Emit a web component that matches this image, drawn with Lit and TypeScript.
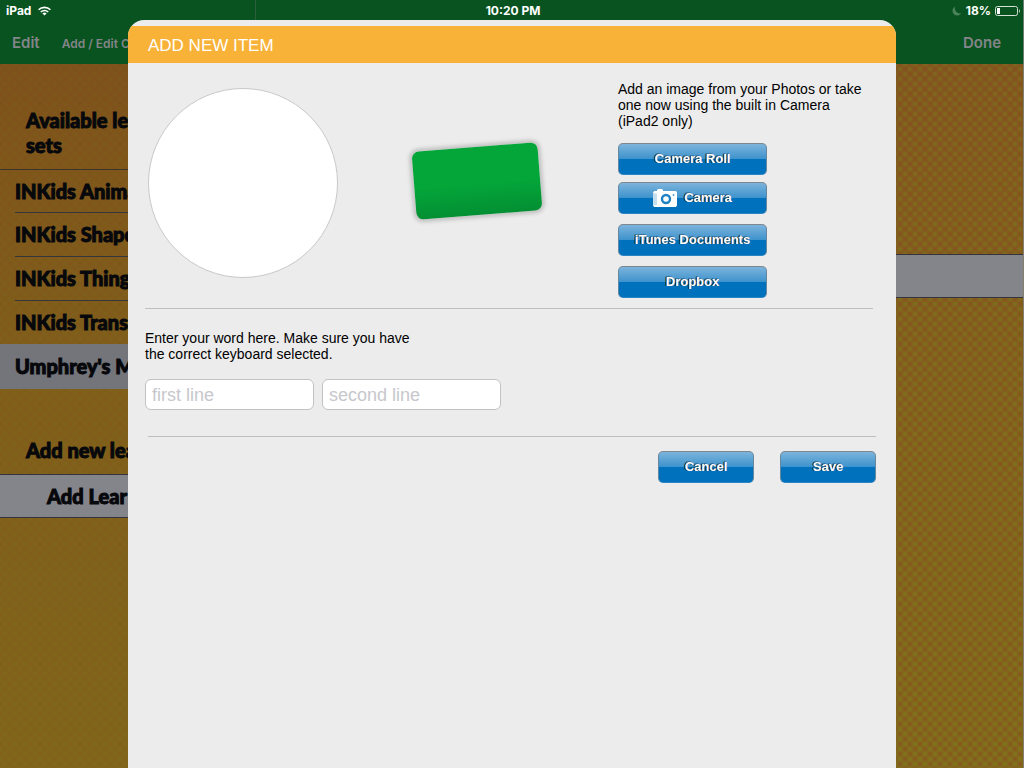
import { LitElement, html, css, svg } from "lit";
import { customElement, property } from "lit/decorators.js";

@customElement("status-bar")
class StatusBar extends LitElement {
  static styles = css`
    :host {
      display: grid;
      grid-template-columns: 1fr auto 1fr;
      align-items: center;
      height: 21px;
      padding: 0 4px 0 6px;
      color: #fff;
      font: 700 12px/21px Inter, sans-serif;
    }
    .side {
      display: flex;
      align-items: center;
      gap: 7px;
    }
    .end {
      justify-content: flex-end;
      gap: 4px;
    }
    svg {
      display: block;
    }
  `;

  render() {
    return html`
      <div class="side">
        <span>iPad</span>
        <svg width="13" height="10" viewBox="0 0 13 10" fill="none" stroke="#fff" stroke-width="1.6">
          <path d="M0.6 3.8a8.4 8.4 0 0 1 11.8 0" />
          <path d="M2.8 6a5.3 5.3 0 0 1 7.4 0" />
          <path d="M6.5 9.6 4.4 7.5a3 3 0 0 1 4.2 0z" fill="#fff" stroke="none" />
        </svg>
      </div>
      <span>10:20 PM</span>
      <div class="side end">
        <svg width="10" height="10" viewBox="0 0 10 10">
          <path d="M3.2 0.4A4.8 4.8 0 1 0 9.4 7.2 5.2 5.2 0 0 1 3.2 0.4z" fill="#4c8259" />
        </svg>
        <span>18%</span>
        <svg width="25" height="10" viewBox="0 0 25 10">
          <rect x="0.5" y="0.5" width="22" height="9" rx="2" fill="none" stroke="#d5e0d7" />
          <rect x="2" y="2" width="3" height="6" fill="#fff" />
          <path d="M24 3.2v3.6c1.2-.6 1.2-3 0-3.6z" fill="#d5e0d7" />
        </svg>
      </div>
    `;
  }
}

@customElement("gloss-button")
class GlossButton extends LitElement {
  @property() label = "";
  @property() icon = "";

  static styles = css`
    :host {
      display: block;
    }
    .button {
      display: flex;
      align-items: center;
      justify-content: center;
      gap: 7px;
      box-sizing: border-box;
      width: 100%;
      height: 32px;
      padding: 0 8px;
      border: 1px solid;
      border-color: #7c878f #64879f #2b84c4;
      border-radius: 5px;
      background: linear-gradient(#7db4dc, #3e93cd 49%, #0071bd 50%, #0071bd);
      color: #fff;
      font: bold 13px/16px "Liberation Sans", Arial, sans-serif;
      text-shadow: -1px 0 0 #0b1a26, -1px -1px 0 #10283c66;
      white-space: nowrap;
      cursor: pointer;
    }
    svg {
      display: block;
    }
  `;

  render() {
    const camera = svg`
      <path d="M0 3.4 1.2 2H4V1l1-1h4l1 1v1h13l1 1.4v13L22.8 18H1.2L0 16.6z" fill="#fff"/>
      <path d="M0 3.6 4 5v11L0 16.6z" fill="#c8dff0"/>
      <circle cx="13" cy="10" r="4" fill="none" stroke="#1f80c3" stroke-width="2.4"/>
      <path d="M20.5 5v2M19.5 6h2" stroke="#5aa2d4" stroke-width="1"/>`;
    return html`
      <button class="button" type="button">
        ${this.icon === "camera"
          ? html`<svg width="24" height="18" viewBox="0 0 24 18" aria-hidden="true">${camera}</svg>`
          : ""}
        <span>${this.label}</span>
      </button>
    `;
  }
}

@customElement("add-item-form")
class AddItemForm extends LitElement {
  static styles = css`
    :host {
      display: block;
      box-sizing: border-box;
      padding-top: 6px;
      border-radius: 16px 16px 0 0;
      overflow: hidden;
      background: #ececec;
      color: #000;
      font: 14px/16px "Liberation Sans", Arial, sans-serif;
    }
    .title {
      margin: 0;
      padding: 2px 20px 0;
      background: #f8b238;
      color: #fff;
      font-size: 17px;
      font-weight: 400;
      line-height: 35px;
    }
    .picture {
      display: grid;
      grid-template-columns: 1fr 1fr 255px;
      margin: 0 23px 0 17px;
      padding: 18px 0 10px;
      border-bottom: 1px solid #bfbfc1;
    }
    .photo {
      box-sizing: border-box;
      width: 190px;
      height: 190px;
      margin: 7px 0 0 3px;
      border: 1px solid #c8c8c8;
      border-radius: 50%;
      background: #fff;
    }
    .card {
      width: 126px;
      height: 68px;
      margin: 66px 0 0 32px;
      border-radius: 7px;
      background: linear-gradient(#04a539 55%, #038f33);
      box-shadow: 0 0 4px 3px #c4c4c4;
      transform: rotate(-4.5deg);
    }
    .sources {
      display: flex;
      flex-direction: column;
      align-items: flex-start;
      gap: 10px;
    }
    .sources gloss-button {
      width: 149px;
    }
    .hint {
      margin: 0;
    }
    .sources .hint {
      margin-bottom: 4px;
    }
    .pair {
      display: grid;
      gap: 7px;
    }
    .words {
      margin: 0 20px 0 17px;
      padding: 21px 0 26px;
    }
    .words .hint {
      max-width: 280px;
    }
    .fields {
      display: flex;
      gap: 8px;
      margin-top: 17px;
    }
    .field {
      box-sizing: border-box;
      width: 169px;
      height: 31px;
      padding: 2px 6px 0;
      border: 1px solid #c2c2c4;
      border-radius: 6px;
      background: #fff;
      font: 18px/24px "Liberation Sans", Arial, sans-serif;
    }
    .wide {
      width: 179px;
    }
    .field::placeholder {
      color: #c7c7cd;
      opacity: 1;
    }
    .actions {
      display: flex;
      justify-content: flex-end;
      gap: 26px;
      margin: 0 20px;
      padding-top: 14px;
      border-top: 1px solid #bfbfc1;
    }
    .actions gloss-button {
      width: 96px;
    }
  `;

  render() {
    return html`
      <h1 class="title">ADD NEW ITEM</h1>
      <section class="picture">
        <div class="photo"></div>
        <div class="card"></div>
        <div class="sources">
          <p class="hint">
            Add an image from your Photos or take one now using the built in Camera (iPad2 only)
          </p>
          <div class="pair">
            <gloss-button label="Camera Roll"></gloss-button>
            <gloss-button label="Camera" icon="camera"></gloss-button>
          </div>
          <gloss-button label="iTunes Documents"></gloss-button>
          <gloss-button label="Dropbox"></gloss-button>
        </div>
      </section>
      <section class="words">
        <p class="hint" id="word-hint">
          Enter your word here. Make sure you have the correct keyboard selected.
        </p>
        <div class="fields">
          <input class="field" type="text" placeholder="first line" aria-labelledby="word-hint" />
          <input class="field wide" type="text" placeholder="second line" aria-labelledby="word-hint" />
        </div>
      </section>
      <footer class="actions">
        <gloss-button label="Cancel"></gloss-button>
        <gloss-button label="Save"></gloss-button>
      </footer>
    `;
  }
}

@customElement("app-root")
class AppRoot extends LitElement {
  static styles = css`
    :host {
      display: flex;
      flex-direction: column;
      position: relative;
      min-height: 100vh;
      overflow: hidden;
      background: #08531f;
      color: #07080c;
      font: 900 20px/25px Lato, sans-serif;
    }
    .top {
      display: grid;
      grid-template-columns: 25% 1fr;
      height: 64px;
    }
    .bar {
      display: flex;
      align-items: flex-end;
      justify-content: space-between;
      box-sizing: border-box;
      padding: 0 12px 11px;
      border-right: 1px solid #2b5f3b;
    }
    .bar.main {
      justify-content: flex-end;
      padding-right: 22px;
      border-right-color: #6b7f70;
    }
    .nav {
      padding: 0;
      border: 0;
      background: none;
      color: #84858a;
      font: 600 15px/20px Inter, sans-serif;
    }
    .heading {
      flex: 1;
      margin: 0 0 0 22px;
      color: #84858a;
      font: 600 12px/18px Inter, sans-serif;
      white-space: nowrap;
    }
    .split {
      flex: 1;
      display: grid;
      grid-template-columns: 25% 1fr;
      background:
        radial-gradient(circle, #8a4c1fb3, #8a4c1f00 4px) 0 0 / 10px 10px,
        radial-gradient(circle, #8a4c1fb3, #8a4c1f00 4px) 5px 5px / 10px 10px,
        radial-gradient(circle, #7c801a88, #7c801a00 4px) 5px 0 / 10px 10px,
        radial-gradient(circle, #7c801a88, #7c801a00 4px) 0 5px / 10px 10px,
        linear-gradient(#82561f, #82621d 40%, #826b1b);
    }
    .side {
      background: linear-gradient(#7d501ac0, #7f5c1ac0 40%, #80641ac0);
    }
    .group {
      margin: 0;
      padding: 0 26px;
      font: inherit;
      -webkit-text-stroke: 1px #07080c;
    }
    .first {
      width: 112px;
      padding-top: 44px;
      padding-bottom: 11px;
    }
    .sets {
      margin: 0;
      padding: 0;
      border-top: 1px solid #3a342b;
      list-style: none;
      -webkit-text-stroke: 1px #07080c;
    }
    .set {
      height: 43px;
      margin-left: 15px;
      border-bottom: 1px solid #34363c;
      line-height: 42px;
      white-space: nowrap;
    }
    .set:first-child {
      height: 42px;
    }
    .set.last {
      border-bottom: 0;
    }
    .set.current {
      height: 45px;
      margin-left: 0;
      padding-left: 15px;
      border-bottom: 0;
      background: #74757a;
      line-height: 44px;
    }
    .second {
      padding-top: 49px;
      padding-bottom: 11px;
    }
    .band {
      box-sizing: border-box;
      height: 44px;
      border: solid #34353c;
      border-width: 1px 0;
      background: #84858a;
    }
    .add {
      display: block;
      width: 100%;
      padding: 0 47px;
      color: inherit;
      font: inherit;
      text-align: left;
      -webkit-text-stroke: 1px #07080c;
    }
    .detail {
      padding-top: 190px;
      border-right: 1px solid #837d72;
    }
    .status {
      position: absolute;
      inset: 0 0 auto;
    }
    .sheet {
      position: absolute;
      inset: 20px 12.5% 0;
    }
  `;

  sets = ["INKids Anima", "INKids Shape", "INKids Thing", "INKids Trans"];

  render() {
    return html`
      <header class="top">
        <div class="bar">
          <button class="nav" type="button">Edit</button>
          <h2 class="heading">Add / Edit C</h2>
        </div>
        <div class="bar main">
          <button class="nav" type="button">Done</button>
        </div>
      </header>
      <div class="split">
        <nav class="side">
          <h3 class="group first">Available le sets</h3>
          <ul class="sets">
            ${this.sets.map(
              (name, i) => html`<li class="set ${i === this.sets.length - 1 ? "last" : ""}">${name}</li>`
            )}
            <li class="set current">Umphrey's M</li>
          </ul>
          <h3 class="group second">Add new lea</h3>
          <button class="band add" type="button">Add Lear</button>
        </nav>
        <main class="detail"><div class="band"></div></main>
      </div>
      <status-bar class="status"></status-bar>
      <add-item-form class="sheet"></add-item-form>
    `;
  }
}
